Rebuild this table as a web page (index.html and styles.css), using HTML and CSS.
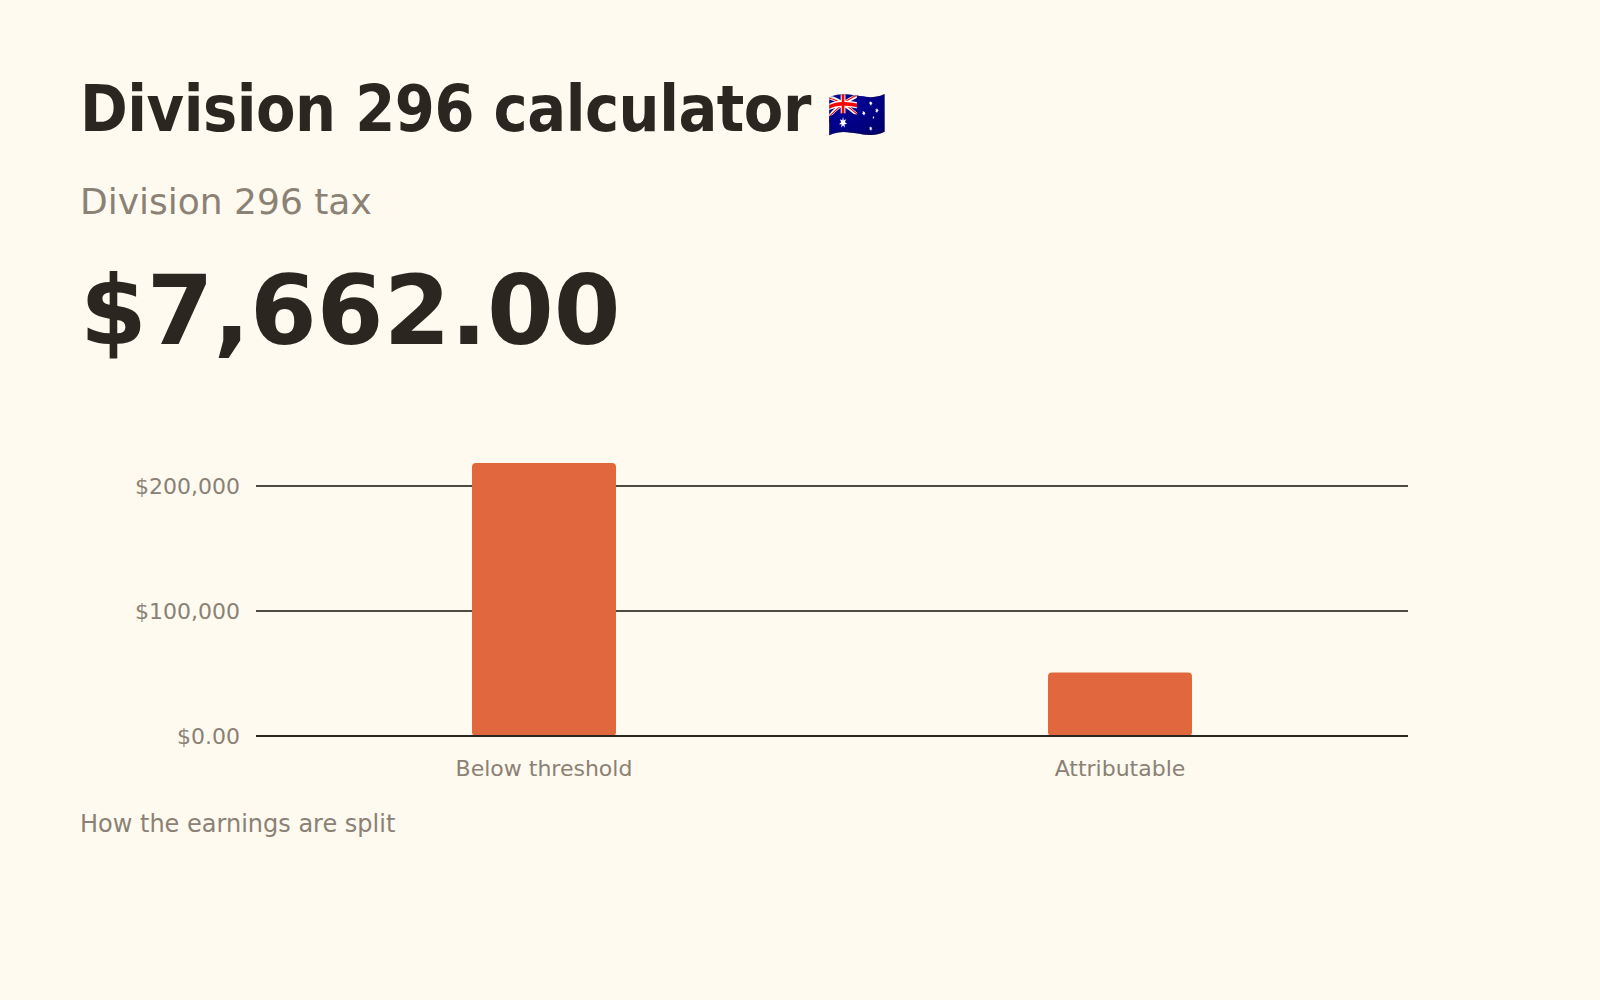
FILE: index.html
```html
<!DOCTYPE html>
<html lang="en">
<head>
<meta charset="utf-8">
<title>Division 296 calculator</title>
<link rel="stylesheet" href="styles.css">
</head>
<body>
<main class="page">
  <h1 class="title">Division 296 calculator <span class="flag">🇦🇺</span></h1>
  <p class="label">Division 296 tax</p>
  <p class="amount">$7,662.00</p>
  <figure class="chart">
    <svg class="chart-svg" width="1360" height="350" viewBox="0 0 1360 350" role="img" aria-label="How the earnings are split">
      <g class="grid">
        <line x1="176" x2="1328" y1="46" y2="46"></line>
        <line x1="176" x2="1328" y1="171" y2="171"></line>
      </g>
      <g class="y-labels">
        <text x="160" y="54">$200,000</text>
        <text x="160" y="179">$100,000</text>
        <text x="160" y="304">$0.00</text>
      </g>
      <g class="bars">
        <rect x="392" y="23" width="144" height="273" rx="4" ry="4"></rect>
        <rect x="968" y="232.4" width="144" height="63.6" rx="4" ry="4"></rect>
      </g>
      <line class="axis" x1="176" x2="1328" y1="296" y2="296"></line>
      <g class="x-labels">
        <text x="464" y="336">Below threshold</text>
        <text x="1040" y="336">Attributable</text>
      </g>
    </svg>
    <figcaption class="caption">How the earnings are split</figcaption>
  </figure>
</main>
</body>
</html>
```
FILE: styles.css
```css
html, body {
  margin: 0;
  padding: 0;
  background: #fefaf0;
}

body {
  font-family: "DejaVu Sans", sans-serif;
  color: #2b2720;
}

.page {
  padding: 71px 80px 40px;
}

.title {
  margin: 0;
  height: 77px;
  font-family: "DejaVu Sans Condensed", "DejaVu Sans", sans-serif;
  font-stretch: condensed;
  font-weight: bold;
  font-size: 64px;
  line-height: 77px;
  letter-spacing: -0.46px;
  color: #2b2720;
  white-space: nowrap;
}

.flag {
  margin-left: -3px;
  font-family: "Noto Color Emoji", sans-serif;
  font-size: 0.75em;
  font-weight: normal;
  line-height: 0;
  letter-spacing: 0;
}

.label {
  margin: 32px 0 0;
  font-size: 36px;
  line-height: 43px;
  color: #8b8174;
}

.amount {
  margin: 31px 0 0;
  font-weight: bold;
  font-size: 96px;
  line-height: 115px;
  color: #2b2720;
}

.chart {
  margin: 71px 0 0;
  padding: 0;
}

.chart-svg {
  display: block;
}

.grid line {
  stroke: #4f4a43;
  stroke-width: 2;
}

.axis {
  stroke: #2b2720;
  stroke-width: 2;
}

.bars rect {
  fill: #e1683e;
}

.y-labels text,
.x-labels text {
  font-family: "DejaVu Sans", sans-serif;
  font-size: 22px;
  fill: #8b8174;
}

.y-labels text {
  text-anchor: end;
}

.x-labels text {
  text-anchor: middle;
}

.caption {
  margin: 20px 0 0;
  font-size: 24px;
  line-height: 29px;
  color: #8b8174;
}
```
